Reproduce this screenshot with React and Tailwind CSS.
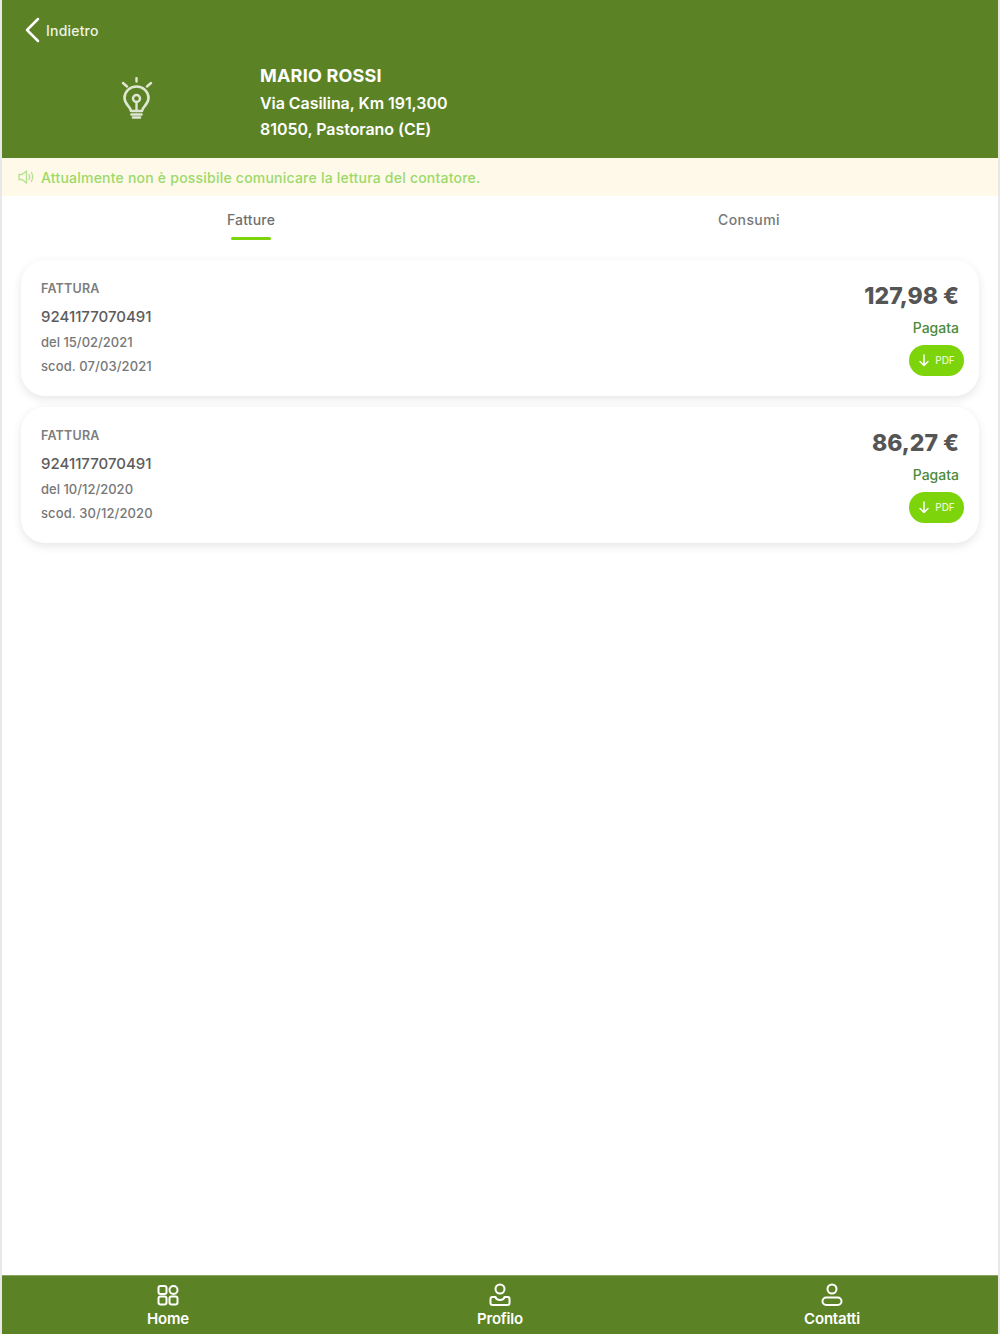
const fattura = [
  { numero: "9241177070491", del: "del 15/02/2021", scad: "scod. 07/03/2021", importo: "127,98 €" },
  { numero: "9241177070491", del: "del 10/12/2020", scad: "scod. 30/12/2020", importo: "86,27 €" },
];

function Bulb() {
  return (
    <svg width="32" height="44" viewBox="0 0 32 44" fill="none" stroke="#dfe6d3" strokeLinecap="round" strokeLinejoin="round">
      <path d="M15.500 1v3.500M2 6l4 3.500M30 6l-4 3.500" strokeWidth="2.400" />
      <path d="M10 34c0-4.500-6.500-6-6.500-13a12 11.500 0 0 1 24 0c0 7-6.500 8.500-6.500 13z" strokeWidth="2.600" />
      <circle cx="15.500" cy="21.500" r="3.500" strokeWidth="2.400" />
      <path d="M15.500 25v9" strokeWidth="2.400" />
      <path d="M10.500 37.500h10M12 40.500h7" strokeWidth="2.600" />
    </svg>
  );
}

function Speaker() {
  return (
    <svg width="16" height="14" viewBox="0 0 16 14" fill="none" stroke="#b5e08f" strokeWidth="1.300" strokeLinejoin="round" strokeLinecap="round">
      <path d="M1 4.500v5h3l4.500 3.500V1L4 4.500z" />
      <path d="M11 4.500c.8 1.500.8 3.500 0 5M13.500 2.500c1.500 3 1.500 6 0 9" />
    </svg>
  );
}

function HomeIcon() {
  return (
    <svg width="24" height="24" viewBox="0 0 24 24" fill="none" stroke="white" strokeWidth="2" strokeLinejoin="round">
      <rect x="2.500" y="3" width="8" height="8" rx="2" />
      <circle cx="17.500" cy="7" r="4" />
      <rect x="2.500" y="13.500" width="8" height="8" rx="2" />
      <rect x="13.500" y="13.500" width="8" height="8" rx="2" />
    </svg>
  );
}

function ProfileIcon() {
  return (
    <svg width="24" height="24" viewBox="0 0 24 24" fill="none" stroke="white" strokeWidth="2" strokeLinejoin="round">
      <circle cx="12" cy="6" r="4.500" />
      <path d="M7.500 14H4.500a2 2 0 0 0-2 2v4a2 2 0 0 0 2 2h15a2 2 0 0 0 2-2v-4a2 2 0 0 0-2-2h-3c-.5 2-2.200 3-4.500 3s-4-1-4.500-3z" />
    </svg>
  );
}

function ContactIcon() {
  return (
    <svg width="24" height="24" viewBox="0 0 24 24" fill="none" stroke="white" strokeWidth="2" strokeLinejoin="round">
      <circle cx="12" cy="6" r="4.500" />
      <rect x="2.500" y="14.500" width="19" height="7.500" rx="3.700" />
    </svg>
  );
}

function NavItem({ icon, label }) {
  return (
    <div className="flex-1 flex flex-col items-center pt-[7px]">
      {icon}
      <span className="mt-[4px] text-[15px] leading-[16px] font-semibold text-white tracking-[-0.2px]">{label}</span>
    </div>
  );
}

function Card({ f }) {
  return (
    <div className="h-[136px] rounded-[24px] bg-white shadow-[0_3px_10px_rgba(0,0,0,0.10)] pl-[20px] pr-[15px] flex justify-between">
      <div className="pt-[20px]">
        <div className="text-[12.500px] leading-[17px] font-semibold text-[#7d7d7d] tracking-[0.2px]">FATTURA</div>
        <div className="mt-[9px] text-[15px] leading-[22px] font-medium text-[#5c5c5c]">{f.numero}</div>
        <div className="mt-[4px] text-[13px] leading-[20px] font-medium text-[#777]">{f.del}</div>
        <div className="mt-[4px] text-[13px] leading-[20px] font-medium text-[#777] tracking-[0.1px]">{f.scad}</div>
      </div>
      <div className="pt-[21px] flex flex-col items-end">
        <div className="pr-[5px] text-[23px] leading-[30px] font-extrabold text-[#555]">{f.importo}</div>
        <div className="mt-[8px] pr-[5px] text-[14px] leading-[18px] font-medium text-[#4c8a3c]">Pagata</div>
        <div className="mt-[8px] w-[55px] h-[31px] rounded-full bg-[#7ed40a] flex items-center justify-center gap-[5px] text-white">
          <svg width="12" height="13" viewBox="0 0 12 13" fill="none" stroke="white" strokeWidth="1.500" strokeLinecap="round" strokeLinejoin="round">
            <path d="M6 1v10.500M2 7.500l4 4 4-4" />
          </svg>
          <span className="text-[10px] font-medium text-[#e6f7cf]">PDF</span>
        </div>
      </div>
    </div>
  );
}

export default function App() {
  return (
    <div className="h-[1334px] bg-[#e8e8e8] px-[2px] font-['Inter','Open_Sans',sans-serif]">
      <div className="h-full bg-white flex flex-col">
        {/* Testata */}
        <div className="h-[158px] bg-[#5b8325] text-white shrink-0">
          <div className="flex items-center pl-[22px] pt-[13px] h-[47px]">
            <svg width="16" height="26" viewBox="0 0 16 26" fill="none" stroke="white" strokeWidth="2.500" strokeLinecap="round" strokeLinejoin="round">
              <path d="M14 2L3 13l11 11" />
            </svg>
            <span className="ml-[6px] text-[14px] font-medium text-[#eef2e6] tracking-[0.2px]">Indietro</span>
          </div>
          <div className="flex">
            <div className="w-[258px] flex justify-center pl-[12px] pt-[30px]">
              <Bulb />
            </div>
            <div className="font-semibold text-[16px] leading-[26px] tracking-[-0.05px] pt-[16px]">
              <div className="text-[18px] font-bold tracking-[0.2px]">MARIO ROSSI</div>
              <div className="pt-[1px]">Via Casilina, Km 191,300</div>
              <div>81050, Pastorano (CE)</div>
            </div>
          </div>
        </div>

        {/* Avviso */}
        <div className="h-[38px] bg-[#fef9e8] flex items-center pl-[16px] gap-[7px] shrink-0">
          <Speaker />
          <span className="pt-[1px] text-[14px] font-medium text-[#9bd96a] tracking-[0.22px]">
            Attualmente non è possibile comunicare la lettura del contatore.
          </span>
        </div>

        {/* Tab */}
        <div className="flex h-[45px] shrink-0">
          <div className="flex-1 flex flex-col items-center pt-[14px]">
            <span className="text-[14px] leading-[19px] font-medium text-[#6f6f6f] tracking-[0.2px]">Fatture</span>
            <div className="mt-[8px] w-[40px] h-[3px] bg-[#7ed40a] rounded-full"></div>
          </div>
          <div className="flex-1 flex flex-col items-center pt-[14px]">
            <span className="text-[14px] leading-[19px] font-medium text-[#777] tracking-[0.4px]">Consumi</span>
          </div>
        </div>

        {/* Fatture */}
        <div className="flex-1 px-[19px] pt-[19px] flex flex-col gap-[11px]">
          {fattura.map((f, i) => (
            <Card key={i} f={f} />
          ))}
        </div>

        {/* Menu */}
        <div className="h-[59px] bg-[#5b8325] flex shrink-0 border-t border-t-[#8aa566]">
          <NavItem icon={<HomeIcon />} label="Home" />
          <NavItem icon={<ProfileIcon />} label="Profilo" />
          <NavItem icon={<ContactIcon />} label="Contatti" />
        </div>
      </div>
    </div>
  );
}
